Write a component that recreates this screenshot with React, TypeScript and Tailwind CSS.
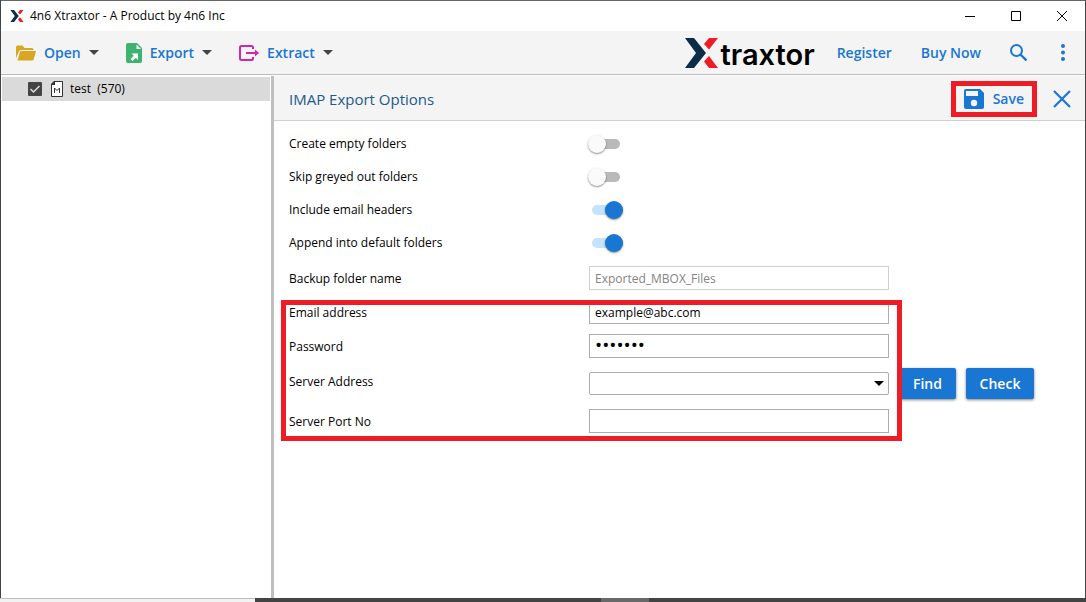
import type { ReactNode } from "react";
import { useState } from "react";

function XMark({ className }: { className: string }) {
  return (
    <svg viewBox="0 0 33 30" className={className} aria-hidden="true">
      <path d="M0 0h9l12 15L9 30H0l11-15z" fill="#0b2d48" />
      <path d="M24 0h9l-9 11.500-5-5.500zM24 18l9 12h-9l-5-6.500z" fill="#ee1c25" />
    </svg>
  );
}

function Caret() {
  return (
    <svg viewBox="0 0 10 5" className="w-[10px] h-[5px]" aria-hidden="true">
      <path d="M0 0h10L5 5z" fill="#444" />
    </svg>
  );
}

function OpenIcon() {
  return (
    <svg viewBox="0 0 20 16" className="w-5 h-4" aria-hidden="true">
      <path d="M0 13V2Q0 .5 1.500.500H6.500L8.500 3H16Q17.500 3 17.500 4.500V5H5Q3.500 5 3 6.500z" fill="#daa520" />
      <path d="M5 6H19.500Q20 6 19.800 7L17.800 14Q17.500 15.500 16 15.500H1Q1.500 15 2 14L4 7Q4.300 6 5 6z" fill="#daa520" />
    </svg>
  );
}

function ExportIcon() {
  return (
    <svg viewBox="0 0 16 20" className="w-4 h-5" aria-hidden="true">
      <path d="M2 0h9l5 5v13q0 2-2 2H2q-2 0-2-2V2q0-2 2-2z" fill="#3cb371" />
      <path d="M10.500 1.500V6H15z" fill="#fff" />
      <path d="M5.500 10.500H12V17L9.800 14.800 6.500 18 4.500 16l3.300-3.200z" fill="#fff" />
    </svg>
  );
}

function ExtractIcon() {
  return (
    <svg viewBox="0 0 20 16" className="w-5 h-4" fill="none" stroke="#d127ab" strokeWidth="2" aria-hidden="true">
      <path d="M14 4V2.500Q14 1 12.500 1H2.500Q1 1 1 2.500v11Q1 15 2.500 15h10q1.500 0 1.500-1.500V12M7 8h10" />
      <path d="M16 4.500L20 8l-4 3.500z" fill="#d127ab" stroke="none" />
    </svg>
  );
}

function MenuButton({ icon, label }: { icon: ReactNode; label: string }) {
  return (
    <button className="flex items-center text-sm font-semibold text-[#1976d2]">
      {icon}
      <span className="mx-2">{label}</span>
      <Caret />
    </button>
  );
}

function TitleBar() {
  return (
    <header className="flex h-[31px] items-center justify-between border-t border-[#666] bg-white pl-[9px] pr-[18px]">
      <div className="flex items-center gap-[6px]">
        <XMark className="h-3 w-[14px]" />
        <span>4n6 Xtraxtor - A Product by 4n6 Inc</span>
      </div>
      <div className="flex items-center gap-9">
        <button aria-label="Minimize">
          <svg viewBox="0 0 10 10" className="size-[10px]" stroke="#000"><path d="M0 5.500h10" /></svg>
        </button>
        <button aria-label="Maximize">
          <svg viewBox="0 0 10 10" className="size-[10px]" fill="none" stroke="#000"><path d="M.5.500h9v9h-9z" /></svg>
        </button>
        <button aria-label="Close window">
          <svg viewBox="0 0 10 10" className="size-[10px]" stroke="#000"><path d="M0 0l10 10M10 0L0 10" /></svg>
        </button>
      </div>
    </header>
  );
}

function Toolbar() {
  return (
    <nav className="flex h-11 items-center justify-between border-b border-[#bdbdbd] bg-[#f4f4f4] pl-[15px] pr-5">
      <div className="flex items-center gap-[27px]">
        <MenuButton icon={<OpenIcon />} label="Open" />
        <MenuButton icon={<ExportIcon />} label="Export" />
        <MenuButton icon={<ExtractIcon />} label="Extract" />
      </div>
      <div className="flex items-center text-sm font-semibold text-[#1976d2]">
        <div className="flex items-center gap-[2px]">
          <XMark className="h-[30px] w-[33px]" />
          <span className="pt-1 font-['Inter',sans-serif] text-[29px] leading-[30px] font-semibold text-black">traxtor</span>
        </div>
        <a href="#register" className="ml-[22px]">Register</a>
        <a href="#buy" className="ml-[29px]">Buy Now</a>
        <button aria-label="Search" className="ml-[29px]">
          <svg viewBox="0 0 17 17" className="size-[17px]" fill="none" stroke="#1976d2" strokeWidth="2">
            <circle cx="6.500" cy="6.500" r="5.500" />
            <path d="M10.500 10.500l6 6" strokeWidth="2.400" />
          </svg>
        </button>
        <button aria-label="More" className="ml-[34px]">
          <svg viewBox="0 0 4 17" className="h-[17px] w-1" fill="#1976d2">
            <circle cx="2" cy="2" r="2" />
            <circle cx="2" cy="8.500" r="2" />
            <circle cx="2" cy="15" r="2" />
          </svg>
        </button>
      </div>
    </nav>
  );
}

function Sidebar() {
  return (
    <aside className="w-[273px] shrink-0 border-r-3 border-[#bfbfbf] pt-px">
      <label className="mr-px ml-px flex h-6 items-center bg-[#dadada] pl-[26px]">
        <input type="checkbox" defaultChecked className="peer sr-only" />
        <svg viewBox="0 0 14 14" className="size-[14px]" fill="none" aria-hidden="true">
          <rect width="14" height="14" rx="1" fill="#444" />
          <path d="M2.500 7l3 3 6-6" stroke="#ddd" strokeWidth="1.500" />
        </svg>
        <svg viewBox="0 0 12 16" className="ml-[9px] h-4 w-3" fill="none" aria-hidden="true">
          <path d="M3.500.500h8v15H.5v-12z" fill="#fff" stroke="#333" />
          <path d="M0 4V3l3-3h1v4z" fill="#333" />
          <path d="M3.500 12V7L6 9.500 8.500 7v5" stroke="#333" />
        </svg>
        <span className="ml-[7px] whitespace-pre">test  (570)</span>
      </label>
    </aside>
  );
}

function Toggle({ label, initial }: { label: string; initial: boolean }) {
  const [on, setOn] = useState(initial);

  return (
    <label className="flex h-[33px] items-center">
      <span className="w-[300px]">{label}</span>
      <input type="checkbox" checked={on} onChange={() => setOn(!on)} className="sr-only" />
      <span className={`flex h-[18px] w-[34px] items-center ${on ? "justify-end" : "-ml-px"}`}>
        <span className={`flex h-[10px] items-center rounded-full ${on ? "w-[31px] justify-end bg-[#c5e3fc]" : "w-8 bg-[#b9b9b9]"}`}>
          <span className={`size-[18px] rounded-full shadow-[0_1px_2px_rgba(0,0,0,0.45)] ${on ? "bg-[#1976d2]" : "bg-[#fafafa]"}`} />
        </span>
      </span>
    </label>
  );
}

const inputClass = "h-6 w-[300px] border border-[#abadb3] bg-white px-[5px] outline-none disabled:border-[#cfcfcf] disabled:text-[#838383]";
const actionClass = "h-[31px] shrink-0 rounded-xs bg-[#1976d2] text-sm font-semibold text-white shadow-[0_1px_3px_rgba(0,0,0,0.5)]";

function Field({ id, label, type = "text", value, disabled }: { id: string; label: string; type?: string; value?: string; disabled?: boolean }) {
  return (
    <div className="flex items-center">
      <label htmlFor={id} className="w-[300px] shrink-0 pt-[2px]">{label}</label>
      <input id={id} type={type} defaultValue={value} disabled={disabled} className={`${inputClass} ${type === "password" ? "text-[19px]" : ""}`} />
    </div>
  );
}

function ExportOptions() {
  return (
    <main className="flex-1">
      <div className="flex h-[45px] items-center justify-between border-b border-[#cfcfcf] bg-[#f4f4f4] pt-[2px] pr-[14px] pl-[15px]">
        <h1 className="text-[15px] text-[#1c5a8a]">IMAP Export Options</h1>
        <div className="flex items-center gap-4">
          <button className="flex h-9 items-center gap-[9px] border-5 border-[#ee1c25] px-2 text-sm font-semibold text-[#1976d2]">
            <svg viewBox="0 0 20 20" className="size-5" aria-hidden="true">
              <path d="M2 0h14l4 4v14q0 2-2 2H2q-2 0-2-2V2q0-2 2-2z" fill="#1976d2" />
              <path d="M2 2h12v5H2z" fill="#f4f4f4" />
              <circle cx="10" cy="14" r="3.200" fill="#f4f4f4" />
            </svg>
            Save
          </button>
          <button aria-label="Close options">
            <svg viewBox="0 0 18 18" className="size-[18px]" stroke="#1976d2" strokeWidth="2.200">
              <path d="M1 1l16 16M17 1L1 17" />
            </svg>
          </button>
        </div>
      </div>

      <form className="pt-[6px] pl-[15px]">
        <Toggle label="Create empty folders" initial={false} />
        <Toggle label="Skip greyed out folders" initial={false} />
        <Toggle label="Include email headers" initial={true} />
        <Toggle label="Append into default folders" initial={true} />

        <div className="mt-[7px] flex flex-col gap-[10px]">
          <Field id="backup" label="Backup folder name" value="Exported_MBOX_Files" disabled />
          <div className="relative flex w-[600px] flex-col gap-[10px]">
            <Field id="email" label="Email address" value="example@abc.com" />
            <Field id="password" label="Password" type="password" value="abcdefg" />
            <div className="flex items-center">
              <label htmlFor="server" className="w-[300px] shrink-0 self-start pt-[2px] leading-6">Server Address</label>
              <div className="relative shrink-0">
                <select id="server" className="block h-[23px] w-[300px] appearance-none rounded-xs border border-[#abadb3] bg-white px-[5px]">
                  <option></option>
                </select>
                <svg viewBox="0 0 10 5" className="pointer-events-none absolute top-[9px] right-[5px] h-[5px] w-[10px]" aria-hidden="true">
                  <path d="M0 0h10L5 5z" />
                </svg>
              </div>
              <button type="button" className={`${actionClass} ml-[10px] w-[57px]`}>Find</button>
              <button type="button" className={`${actionClass} ml-[10px] w-[68px]`}>Check</button>
            </div>
            <Field id="port" label="Server Port No" />
            <div className="pointer-events-none absolute top-0 -right-[13px] -bottom-2 -left-2 border-5 border-[#ee1c25]" />
          </div>
        </div>
      </form>
    </main>
  );
}

export default function App() {
  return (
    <div className="flex min-h-screen flex-col bg-white font-['Open_Sans','Noto_Sans',sans-serif] text-xs text-black">
      <div className="flex flex-1 flex-col border-x border-[#444]">
        <TitleBar />
        <Toolbar />
        <div className="flex flex-1 pt-px">
          <Sidebar />
          <ExportOptions />
        </div>
      </div>
      <footer className="flex h-1 bg-[#434343]">
        <div className="w-[255px] border-t border-[#bdbdbd] bg-[#f2f2f2]" />
        <div className="ml-[346px] w-12 bg-[#696969]" />
      </footer>
    </div>
  );
}
